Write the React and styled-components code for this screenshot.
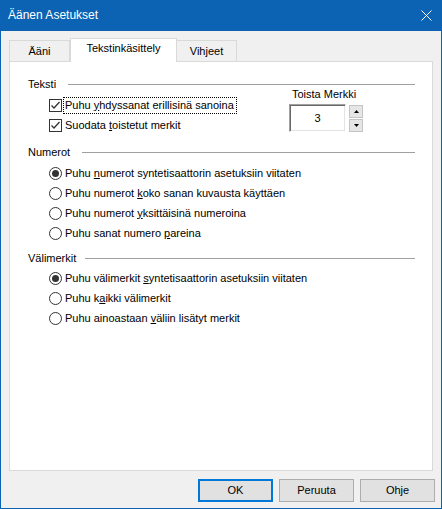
import React from "react";
import styled, { createGlobalStyle } from "styled-components";

const GlobalStyle = createGlobalStyle`
  html, body {
    margin: 0;
    padding: 0;
    background: #ffffff;
  }
  body {
    font-family: "Liberation Sans", Arial, sans-serif;
  }
`;

const Window = styled.div`
  width: 442px;
  height: 509px;
  box-sizing: border-box;
  border: 1px solid #0c63b3;
  border-top: none;
  background: #f0f0f0;
  display: flex;
  flex-direction: column;
  font-size: 11px;
  line-height: 15px;
  color: #000;
`;

const TitleBar = styled.div`
  height: 31px;
  flex-shrink: 0;
  background: #0c63b3;
  color: #fff;
  display: flex;
  align-items: center;
  justify-content: space-between;
  padding: 0 9px 0 7px;
  font-size: 12px;
`;

const Close = styled.div`
  width: 11px;
  height: 11px;
  display: flex;
`;

const TabRow = styled.div`
  display: flex;
  align-items: flex-end;
  height: 23px;
  margin-top: 7px;
  padding-left: 8px;
  flex-shrink: 0;
`;

const Tab = styled.div`
  width: ${({ $w }) => $w}px;
  box-sizing: border-box;
  height: ${({ $selected }) => ($selected ? 24 : 21)}px;
  margin-bottom: ${({ $selected }) => ($selected ? -1 : 0)}px;
  padding-bottom: ${({ $selected }) => ($selected ? 4 : 0)}px;
  border: 1px solid #d9d9d9;
  border-bottom: none;
  border-left: ${({ $first, $selected }) => ($first || $selected ? "1px solid #d9d9d9" : "none")};
  background: ${({ $selected }) => ($selected ? "#ffffff" : "#f0f0f0")};
  position: relative;
  z-index: ${({ $selected }) => ($selected ? 1 : 0)};
  display: flex;
  align-items: center;
  justify-content: center;
`;

const Panel = styled.div`
  flex: 1;
  margin: 0 8px;
  background: #fff;
  border: 1px solid #d9d9d9;
  padding: 15px 17px 0 18px;
  display: flex;
  flex-direction: column;
`;

const GroupHeader = styled.div`
  display: flex;
  align-items: center;
  height: 15px;
  margin-top: ${({ $top }) => $top || 0}px;
`;

const GroupLabel = styled.span`
  width: ${({ $w }) => $w}px;
  flex-shrink: 0;
`;

const Rule = styled.div`
  flex: 1;
  height: 1px;
  background: #a0a0a0;
  margin-top: -1px;
`;

const TextGroup = styled.div`
  display: flex;
  padding-left: 21px;
  margin-right: 52px;
`;

const OptionList = styled.div`
  display: flex;
  flex-direction: column;
  flex: ${({ $grow }) => ($grow ? 1 : "none")};
  margin-top: ${({ $top }) => $top || 0}px;
  padding-left: ${({ $indent }) => $indent || 0}px;
`;

const OptionRow = styled.div`
  display: flex;
  align-items: center;
  height: 20px;
`;

const CheckBox = styled.div`
  width: 13px;
  height: 13px;
  box-sizing: border-box;
  border: 1px solid #333;
  background: #fff;
  display: flex;
  flex-shrink: 0;
`;

const CheckLabel = styled.span`
  margin-left: 1px;
  padding: 0 2px 0 1px;
  border: 1px ${({ $focus }) => ($focus ? "dotted #000" : "solid transparent")};
  white-space: nowrap;
`;

const RadioDot = styled.div`
  width: 13px;
  height: 13px;
  box-sizing: border-box;
  border: 1px solid #333;
  border-radius: 50%;
  background: #fff;
  display: flex;
  align-items: center;
  justify-content: center;
  flex-shrink: 0;

  &::after {
    content: "";
    width: 7px;
    height: 7px;
    border-radius: 50%;
    background: ${({ $checked }) => ($checked ? "#333" : "transparent")};
  }
`;

const RadioLabel = styled.span`
  margin-left: 3px;
  white-space: nowrap;
`;

const Key = styled.span`
  text-decoration: underline;
  text-underline-offset: 1px;
`;

const RepeatBox = styled.div`
  width: 74px;
  display: flex;
  flex-direction: column;
  margin-top: -5px;
`;

const RepeatLabel = styled.div`
  padding-left: 3px;
  white-space: nowrap;
`;

const SpinRow = styled.div`
  display: flex;
  margin-top: 2px;
  gap: 3px;
`;

const SpinEdit = styled.div`
  width: 57px;
  height: 28px;
  box-sizing: border-box;
  border: 1px solid;
  border-color: #a0a0a0 #ffffff #ffffff #a0a0a0;
  box-shadow: inset 1px 1px 0 #696969, inset -1px -1px 0 #e3e3e3;
  background: #fff;
  display: flex;
  align-items: center;
  justify-content: center;
`;

const SpinButtons = styled.div`
  display: flex;
  flex-direction: column;
  gap: 1px;
  width: 14px;
  padding-top: 1px;
`;

const SpinButton = styled.div`
  height: 13px;
  box-sizing: border-box;
  border: 1px solid #c4c4c4;
  background: #e6e6e6;
  display: flex;
  align-items: center;
  justify-content: center;
`;

const Footer = styled.div`
  display: flex;
  justify-content: flex-end;
  gap: 6px;
  padding: 8px 6px 6px 0;
  flex-shrink: 0;
`;

const Button = styled.div`
  width: 75px;
  height: 23px;
  box-sizing: border-box;
  background: #e1e1e1;
  border: 1px solid ${({ $default }) => ($default ? "#0078d7" : "#adadad")};
  box-shadow: ${({ $default }) => ($default ? "inset 0 0 0 1px #0078d7" : "none")};
  display: flex;
  align-items: center;
  justify-content: center;
`;

const Check = () => (
  <svg width="11" height="11" viewBox="0 0 11 11">
    <polyline points="1.5,5.5 4,8 9.5,2" fill="none" stroke="#333" strokeWidth="1.3" />
  </svg>
);

const Arrow = ({ down }) => (
  <svg width="5" height="3" viewBox="0 0 5 3">
    <polygon points={down ? "0,0 5,0 2.5,3" : "0,3 5,3 2.5,0"} fill="#000" />
  </svg>
);

const CheckOption = ({ focus, children }) => (
  <OptionRow>
    <CheckBox>
      <Check />
    </CheckBox>
    <CheckLabel $focus={focus}>{children}</CheckLabel>
  </OptionRow>
);

const RadioOption = ({ checked, children }) => (
  <OptionRow>
    <RadioDot $checked={checked} />
    <RadioLabel>{children}</RadioLabel>
  </OptionRow>
);

export default function App() {
  return (
    <>
      <GlobalStyle />
      <Window>
        <TitleBar>
          <span>Äänen Asetukset</span>
          <Close>
            <svg width="11" height="11" viewBox="0 0 11 11">
              <path d="M0.5 0.5 L10.5 10.5 M10.5 0.5 L0.5 10.5" stroke="#fff" strokeWidth="1" />
            </svg>
          </Close>
        </TitleBar>

        <TabRow>
          <Tab $w={61} $first>Ääni</Tab>
          <Tab $w={107} $selected>Tekstinkäsittely</Tab>
          <Tab $w={60}>Vihjeet</Tab>
        </TabRow>

        <Panel>
          <GroupHeader>
            <GroupLabel $w={40}>Teksti</GroupLabel>
            <Rule />
          </GroupHeader>
          <TextGroup>
            <OptionList $top={3} $grow>
              <CheckOption focus>
                Puhu <Key>y</Key>hdyssanat erillisinä sanoina
              </CheckOption>
              <CheckOption>
                Suodata <Key>t</Key>oistetut merkit
              </CheckOption>
            </OptionList>
            <RepeatBox>
              <RepeatLabel>Toista Merkki</RepeatLabel>
              <SpinRow>
                <SpinEdit>3</SpinEdit>
                <SpinButtons>
                  <SpinButton>
                    <Arrow />
                  </SpinButton>
                  <SpinButton>
                    <Arrow down />
                  </SpinButton>
                </SpinButtons>
              </SpinRow>
            </RepeatBox>
          </TextGroup>

          <GroupHeader $top={10}>
            <GroupLabel $w={54}>Numerot</GroupLabel>
            <Rule />
          </GroupHeader>
          <OptionList $top={3} $indent={21}>
            <RadioOption checked>
              Puhu <Key>n</Key>umerot syntetisaattorin asetuksiin viitaten
            </RadioOption>
            <RadioOption>
              Puhu numerot <Key>k</Key>oko sanan kuvausta käyttäen
            </RadioOption>
            <RadioOption>
              Puhu numerot <Key>y</Key>ksittäisinä numeroina
            </RadioOption>
            <RadioOption>
              Puhu sanat numero <Key>p</Key>areina
            </RadioOption>
          </OptionList>

          <GroupHeader $top={8}>
            <GroupLabel $w={57}>Välimerkit</GroupLabel>
            <Rule />
          </GroupHeader>
          <OptionList $top={2} $indent={21}>
            <RadioOption checked>
              Puhu välimerkit <Key>s</Key>yntetisaattorin asetuksiin viitaten
            </RadioOption>
            <RadioOption>
              Puhu k<Key>a</Key>ikki välimerkit
            </RadioOption>
            <RadioOption>
              Puhu ainoastaan <Key>v</Key>äliin lisätyt merkit
            </RadioOption>
          </OptionList>
        </Panel>

        <Footer>
          <Button $default>OK</Button>
          <Button>Peruuta</Button>
          <Button>Ohje</Button>
        </Footer>
      </Window>
    </>
  );
}
